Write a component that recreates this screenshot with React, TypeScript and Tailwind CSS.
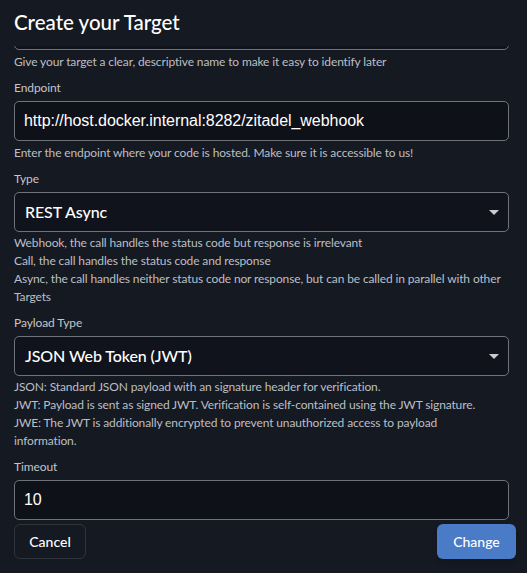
import React from 'react'

const lato = { fontFamily: 'Lato, "Noto Sans", sans-serif' }

function Help({ lines, select }: { lines: string[]; select?: boolean }) {
  return (
    <div className={`${select ? 'mt-[2px]' : 'mt-[3px]'} text-[12px] leading-[18px] tracking-[-0.13px] text-[#bcbfc4]`}>
      {lines.map((l) => (
        <div key={l}>{l}</div>
      ))}
    </div>
  )
}

function Label({ children }: { children: React.ReactNode }) {
  return <div className="mt-2 text-[12px] leading-[18px] tracking-[-0.1px] text-[#c3c6cb]">{children}</div>
}

function TextInput({ value }: { value: string }) {
  return (
    <div className="mt-1 flex h-10 items-center rounded-[5px] border border-[#6f727a] bg-[#0f1119] pl-[9px]">
      <span className="font-['Liberation_Sans',Arial,sans-serif] text-[16px] tracking-[-0.05px] text-white">{value}</span>
    </div>
  )
}

function Select({ value }: { value: string }) {
  return (
    <div className="mt-1 flex h-10 items-center justify-between rounded-[5px] border border-[#6f727a] bg-[#10131b] pl-[10px] pr-[9px]">
      <span className="text-[16px] font-medium tracking-[-0.1px] text-white">{value}</span>
      <svg width="10" height="5" viewBox="0 0 10 5">
        <path d="M0 0 L10 0 L5 5 Z" fill="#c9cbcf" />
      </svg>
    </div>
  )
}

export default function App() {
  return (
    <div className="h-[573px] w-[527px] overflow-hidden bg-[#151922]" style={lato}>
      <div className="h-[46px] px-[14px] pt-[8px]">
        <h1 className="text-[20.5px] font-medium leading-[28px] text-white">Create your Target</h1>
      </div>
      <div className="h-[527px] overflow-hidden">
        <div className="pl-[14px] pr-[18px]">
          <div className="-mt-[36px] h-10 rounded-[5px] border border-[#6f727a] bg-[#10131b]" />
          <Help lines={['Give your target a clear, descriptive name to make it easy to identify later']} />

          <Label>Endpoint</Label>
          <TextInput value="http://host.docker.internal:8282/zitadel_webhook" />
          <Help lines={['Enter the endpoint where your code is hosted. Make sure it is accessible to us!']} />

          <Label>Type</Label>
          <Select value="REST Async" />
          <Help
            select
            lines={[
              'Webhook, the call handles the status code but response is irrelevant',
              'Call, the call handles the status code and response',
              'Async, the call handles neither status code nor response, but can be called in parallel with other',
              'Targets'
            ]}
          />

          <Label>Payload Type</Label>
          <Select value="JSON Web Token (JWT)" />
          <Help
            select
            lines={[
              'JSON: Standard JSON payload with an signature header for verification.',
              'JWT: Payload is sent as signed JWT. Verification is self-contained using the JWT signature.',
              'JWE: The JWT is additionally encrypted to prevent unauthorized access to payload',
              'information.'
            ]}
          />

          <Label>Timeout</Label>
          <TextInput value="10" />
        </div>
        <div className="mt-1 flex items-start justify-between pl-[14px] pr-[11px]">
          <button className="h-[35px] w-[72px] rounded-[6px] border border-[#2f333c] text-[14px] font-medium text-white">
            Cancel
          </button>
          <button className="h-[35px] w-[79px] rounded-[6px] bg-[#4a7bc6] text-[14px] font-medium text-white shadow-md">
            Change
          </button>
        </div>
      </div>
    </div>
  )
}
